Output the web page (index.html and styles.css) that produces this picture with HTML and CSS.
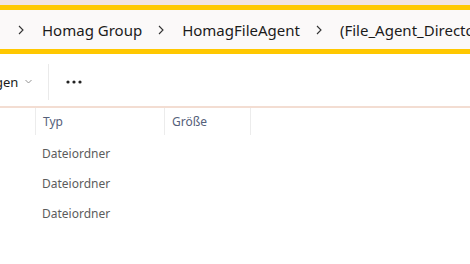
FILE: index.html
```html
<!DOCTYPE html>
<html lang="de">
<head>
    <meta charset="UTF-8">
    <meta name="viewport" content="width=device-width, initial-scale=1.0">
    <title>Explorer</title>
    <link rel="stylesheet" href="styles.css">
</head>
<body>
    <div class="topstrip"></div>
    <div class="addressbar">
        <svg class="chev" width="6" height="10" viewBox="0 0 6 10"><path d="M1 1 L5 5 L1 9" fill="none" stroke="#333" stroke-width="1.1"/></svg>
        <span class="crumb">Homag Group</span>
        <svg class="chev" width="6" height="10" viewBox="0 0 6 10"><path d="M1 1 L5 5 L1 9" fill="none" stroke="#333" stroke-width="1.1"/></svg>
        <span class="crumb">HomagFileAgent</span>
        <svg class="chev" width="6" height="10" viewBox="0 0 6 10"><path d="M1 1 L5 5 L1 9" fill="none" stroke="#333" stroke-width="1.1"/></svg>
        <span class="crumb">(File_Agent_Directory)</span>
    </div>
    <div class="commandbar">
        <span class="cmd">gen</span>
        <svg class="caret" width="7" height="5" viewBox="0 0 7 5"><path d="M0.5 1 L3.5 4 L6.5 1" fill="none" stroke="#888" stroke-width="0.9"/></svg>
        <div class="sep"></div>
        <svg class="more" width="16" height="4" viewBox="0 0 16 4"><circle cx="2" cy="2" r="1.6" fill="#222"/><circle cx="8" cy="2" r="1.6" fill="#222"/><circle cx="14" cy="2" r="1.6" fill="#222"/></svg>
    </div>
    <div class="list">
        <div class="header">
            <div class="col col-name"></div>
            <div class="col col-type">Typ</div>
            <div class="col col-size">Größe</div>
            <div class="col col-rest"></div>
        </div>
        <div class="row"><div class="col-name"></div><div class="cell">Dateiordner</div></div>
        <div class="row"><div class="col-name"></div><div class="cell">Dateiordner</div></div>
        <div class="row"><div class="col-name"></div><div class="cell">Dateiordner</div></div>
    </div>
</body>
</html>
```

FILE: styles.css
```css
body {
    margin: 0;
    width: 470px;
    height: 264px;
    overflow: hidden;
    background: #ffffff;
    font-family: 'Noto Sans', 'Open Sans', sans-serif;
}

.topstrip {
    height: 5px;
    background: #f2e4e0;
}

.addressbar {
    height: 39px;
    border-top: 5px solid #ffc800;
    border-bottom: 5px solid #ffc800;
    background: #fbf9f9;
    display: flex;
    align-items: center;
    padding-left: 18px;
    font-size: 15px;
    color: #1b1b1b;
    white-space: nowrap;
    overflow: hidden;
}

.chev {
    flex: none;
    margin-right: 18px;
}

.crumb {
    margin-right: 16px;
}

.commandbar {
    height: 49px;
    padding-top: 3px;
    display: flex;
    align-items: center;
    font-size: 13px;
    color: #1b1b1b;
    border-bottom: 2px solid #f3ddd2;
}

.cmd {
    margin-left: -5px;
}

.caret {
    margin-left: 7px;
}

.sep {
    width: 1px;
    height: 36px;
    background: #eaeaea;
    margin-left: 16px;
    margin-right: 17px;
}

.more {
    flex: none;
}

.list {
    font-size: 12px;
    color: #5c5c5c;
}

.header {
    display: flex;
    height: 27px;
}

.header .col {
    border-right: 1px solid #ececec;
    padding-left: 7px;
    line-height: 27px;
    color: #55607a;
}

.col-name {
    width: 35px;
    flex: none;
    padding-left: 0 !important;
}

.col-type {
    width: 121px;
}

.col-size {
    width: 78px;
}

.col-rest {
    border-right: none !important;
}

.row {
    display: flex;
    height: 30px;
    align-items: center;
}

.header + .row {
    margin-top: 3px;
}

.cell {
    padding-left: 7px;
}
```
